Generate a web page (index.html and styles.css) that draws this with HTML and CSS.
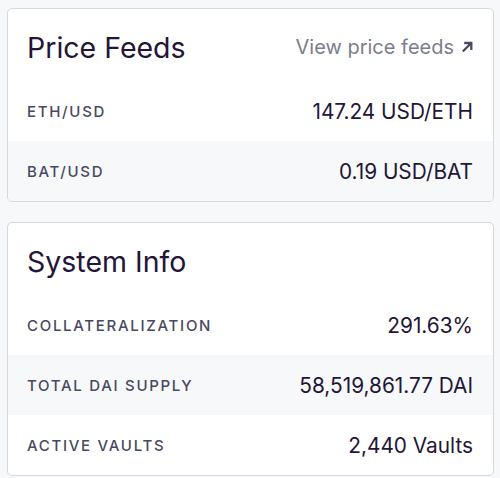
FILE: index.html
```html
<!DOCTYPE html>
<html>
<head>
<meta charset="utf-8">
<link rel="stylesheet" href="styles.css">
</head>
<body>
<div class="page">
  <section class="card">
    <div class="card-head">
      <h2 class="title">Price Feeds</h2>
      <a class="link">View price feeds <svg class="arrow" width="12" height="12" viewBox="0 0 12 12"><path d="M1.8 10.5 L10 2.3 M3.2 2 H10.3 V9" fill="none" stroke="currentColor" stroke-width="2.3"/></svg></a>
    </div>
    <div class="row"><span class="label">ETH/USD</span><span class="value">147.24 USD/ETH</span></div>
    <div class="row alt"><span class="label">BAT/USD</span><span class="value">0.19 USD/BAT</span></div>
  </section>
  <section class="card">
    <div class="card-head">
      <h2 class="title">System Info</h2>
    </div>
    <div class="row"><span class="label">COLLATERALIZATION</span><span class="value">291.63%</span></div>
    <div class="row alt"><span class="label">TOTAL DAI SUPPLY</span><span class="value">58,519,861.77 DAI</span></div>
    <div class="row"><span class="label">ACTIVE VAULTS</span><span class="value">2,440 Vaults</span></div>
  </section>
</div>
</body>
</html>
```
FILE: styles.css
```css
* { box-sizing: border-box; }
html, body { margin: 0; padding: 0; }
body {
  background: #f6f8f9;
  font-family: Inter, "Noto Sans", sans-serif;
  color: #231536;
}
.page {
  padding: 8px 6px 0 7px;
  display: flex;
  flex-direction: column;
  gap: 20px;
}
.card {
  background: #fff;
  border: 1px solid #d4d9e1;
  border-radius: 5px;
  overflow: hidden;
}
.card-head {
  height: 72px;
  padding: 4px 20px 0 19px;
  display: flex;
  align-items: center;
  justify-content: space-between;
}
.title {
  margin: 0;
  font-size: 28.5px;
  font-weight: 400;
  color: #231536;
}
.link {
  font-size: 20px;
  color: #7b7d8c;
  display: flex;
  align-items: center;
  gap: 7px;
}
.arrow { color: #48495f; }
.row {
  height: 60px;
  padding: 0 20px 0 19px;
  display: flex;
  align-items: center;
  justify-content: space-between;
}
.row.alt { background: #f6f8f9; }
.label {
  font-size: 15px;
  font-weight: 500;
  letter-spacing: 1.7px;
  color: #48495f;
  text-transform: uppercase;
}
.value {
  font-size: 20.8px;
  color: #231536;
}
```
